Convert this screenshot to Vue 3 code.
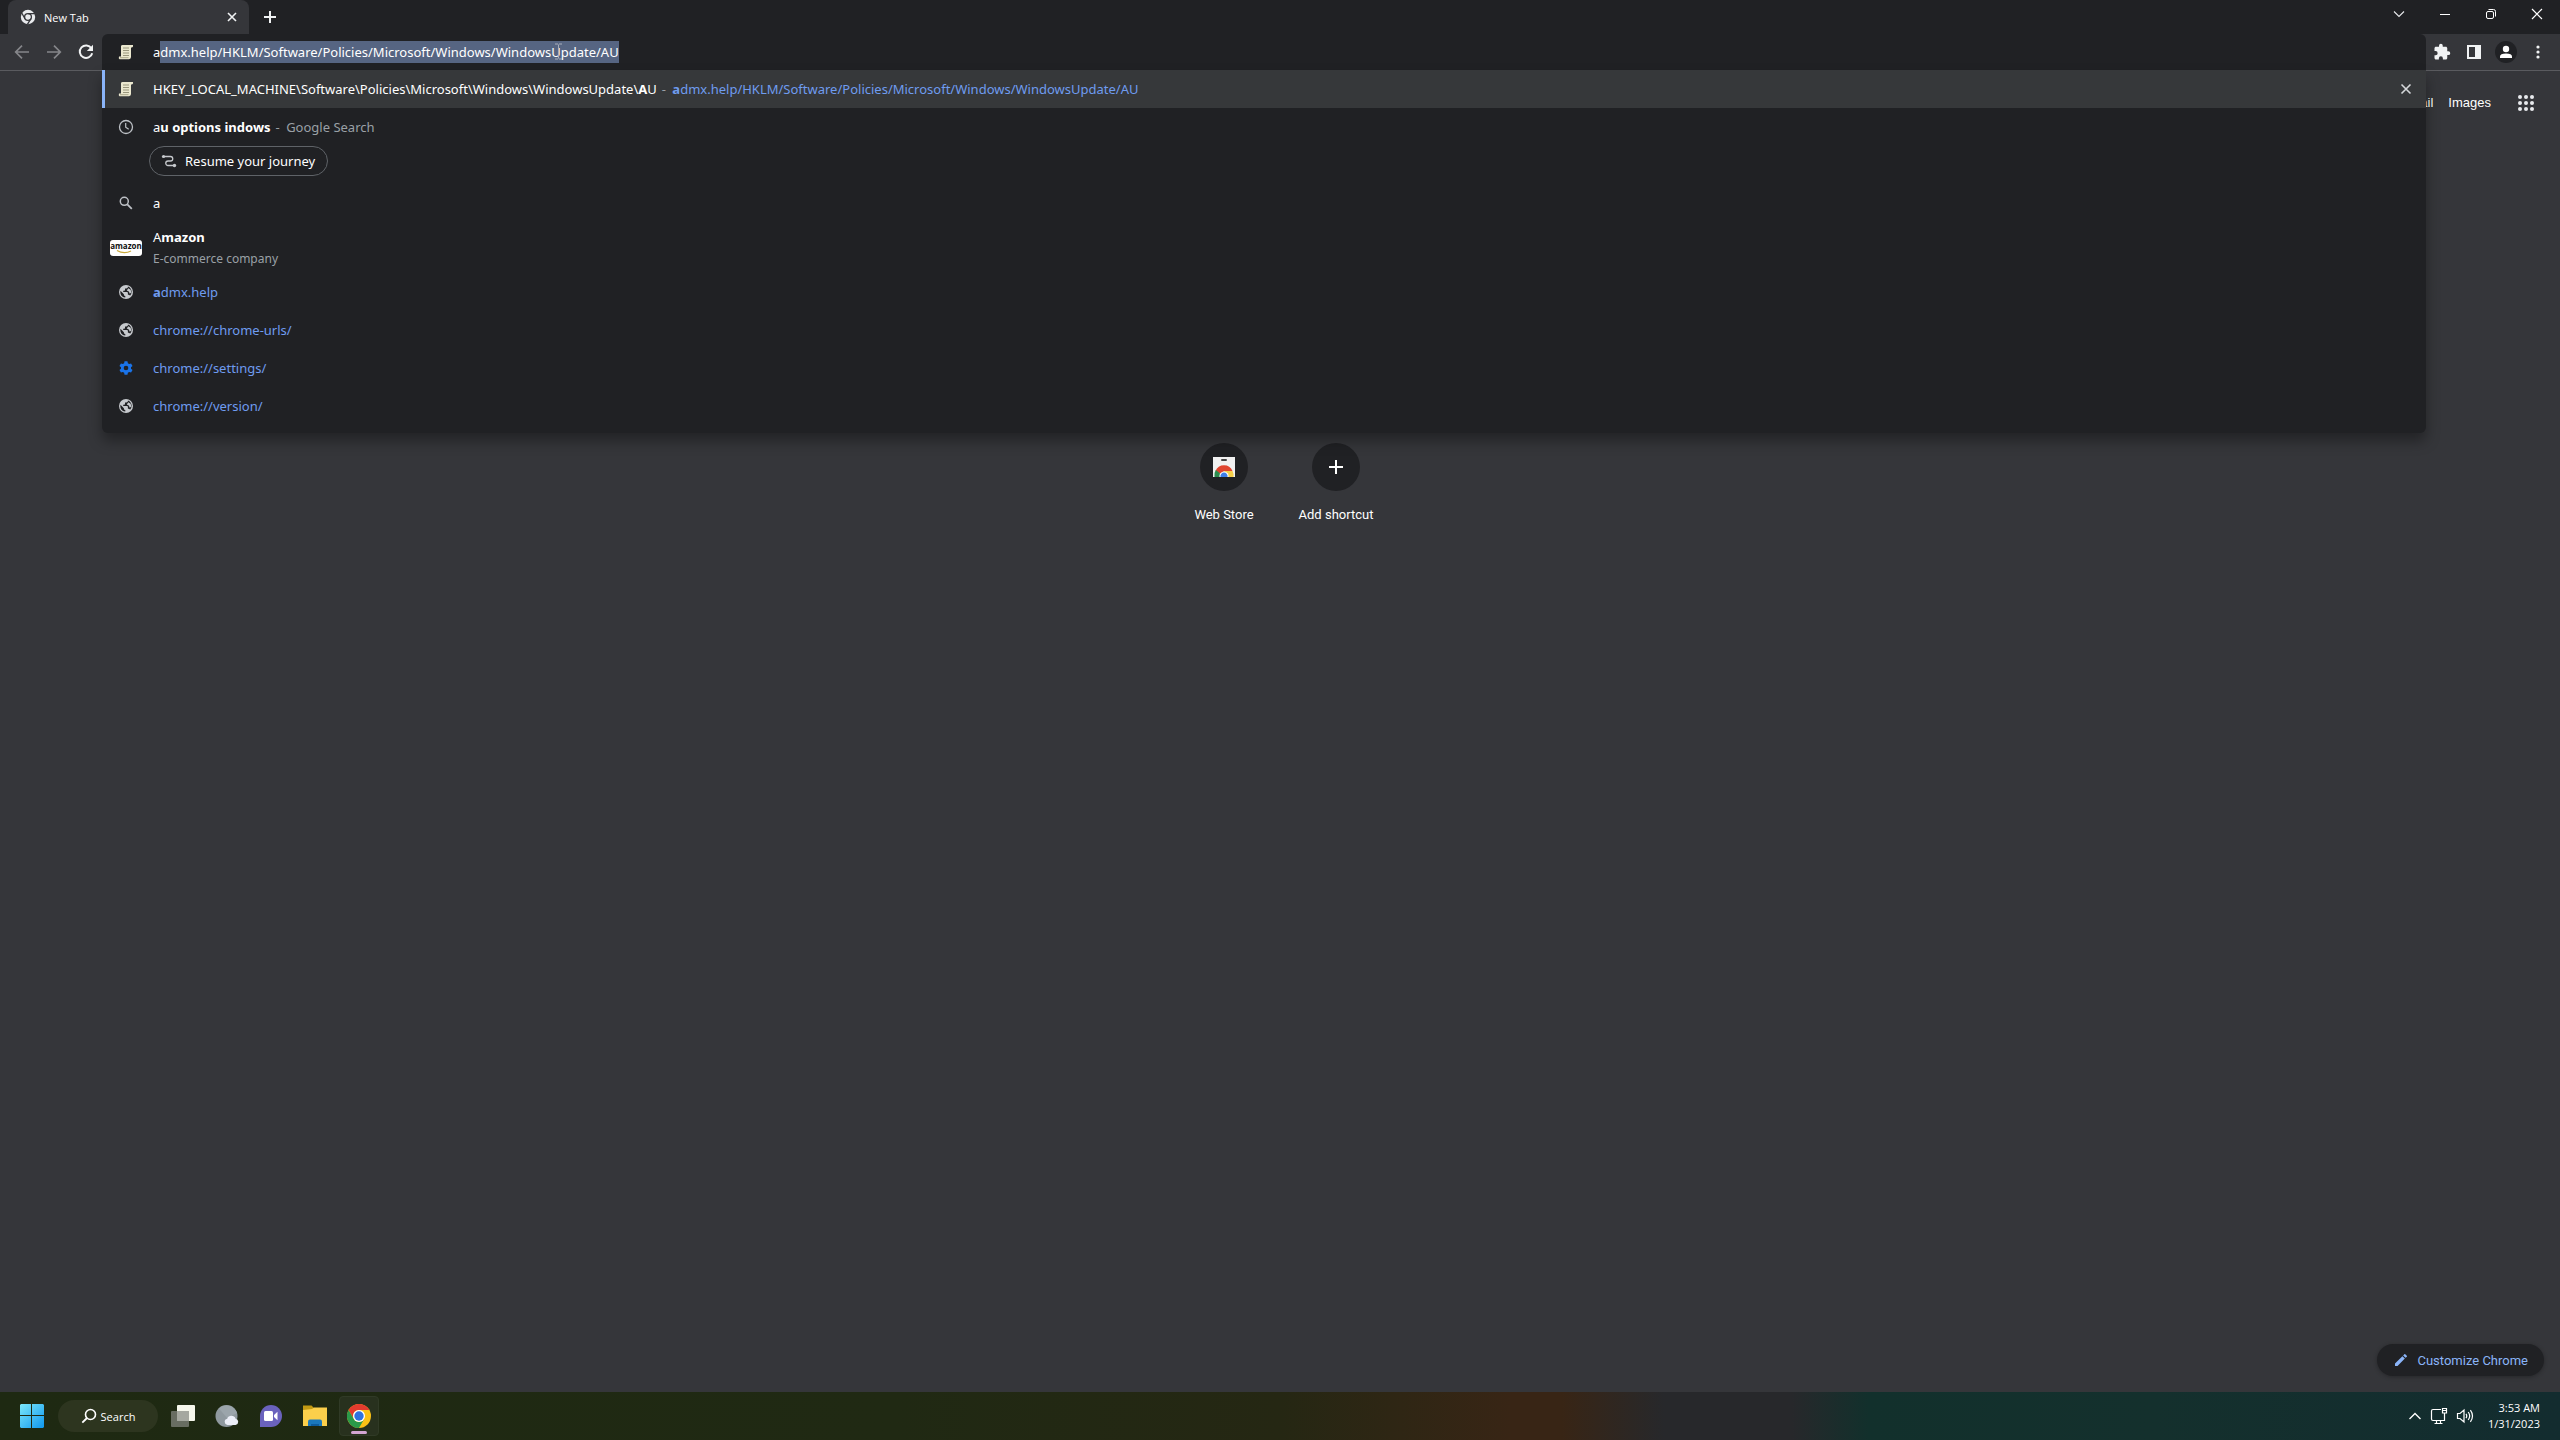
<template>
  <div class="desktop">
    <div class="browser">
      <header class="tab-strip">
        <div class="tab">
          <svg class="tab-icon" viewBox="0 0 16 16">
            <circle cx="8" cy="8" r="7.2" fill="#e8eaed" />
            <circle cx="8" cy="8" r="3.4" fill="none" stroke="#35363a" stroke-width="1.3" />
            <path d="M8 4.6H15M5 9.7L1.6 3.8M10.9 9.7L7.4 15.4" stroke="#35363a" stroke-width="1.3" />
          </svg>
          <span class="tab-title">New Tab</span>
          <button class="icon-btn tab-close" aria-label="Close tab">
            <svg width="16" height="16" viewBox="0 0 16 16"><path d="M4 4l8 8M12 4l-8 8" stroke="#f1f3f4" stroke-width="1.6" /></svg>
          </button>
        </div>
        <button class="icon-btn new-tab" aria-label="New tab">
          <svg width="16" height="16" viewBox="0 0 16 16"><path d="M8 2v12M2 8h12" stroke="#f1f3f4" stroke-width="2" /></svg>
        </button>
        <div class="window-controls">
          <button class="icon-btn" aria-label="Search tabs">
            <svg width="14" height="14" viewBox="0 0 14 14"><path d="M2 4.5l5 5 5-5" fill="none" stroke="#e8eaed" stroke-width="1.1" /></svg>
          </button>
          <button class="icon-btn" aria-label="Minimize">
            <svg width="14" height="14" viewBox="0 0 14 14"><path d="M2 7.500h10" stroke="#fff" stroke-width="1" /></svg>
          </button>
          <button class="icon-btn" aria-label="Restore">
            <svg width="14" height="14" viewBox="0 0 14 14">
              <rect x="2.500" y="4.500" width="7" height="7" rx="1.500" fill="none" stroke="#fff" />
              <path d="M4.500 2.500H9.500Q11.500 2.500 11.500 4.500V9.500" fill="none" stroke="#fff" />
            </svg>
          </button>
          <button class="icon-btn" aria-label="Close">
            <svg width="14" height="14" viewBox="0 0 14 14"><path d="M2 2l10 10M12 2L2 12" stroke="#fff" stroke-width="1.2" /></svg>
          </button>
        </div>
      </header>

      <div class="toolbar">
        <nav class="nav-buttons">
          <button class="icon-btn" aria-label="Back">
            <svg width="16" height="16" viewBox="0 0 16 16"><path d="M15 8H2M8 1.700L1.700 8 8 14.300" fill="none" stroke="#85868a" stroke-width="1.700" /></svg>
          </button>
          <button class="icon-btn" aria-label="Forward">
            <svg width="16" height="16" viewBox="0 0 16 16"><path d="M1 8h13M8 1.700L14.300 8 8 14.300" fill="none" stroke="#85868a" stroke-width="1.700" /></svg>
          </button>
          <button class="icon-btn" aria-label="Reload">
            <svg width="16" height="16" viewBox="0 0 16 16">
              <path d="M13.400 4.300A6.300 6.300 0 1 0 14.200 9.200" fill="none" stroke="#f1f3f4" stroke-width="2" />
              <path d="M15 0.800V7H8.800z" fill="#f1f3f4" />
            </svg>
          </button>
        </nav>

        <div class="omnibox">
          <div class="omnibox-row">
            <span class="row-icon">
              <svg width="16" height="16" viewBox="0 0 16 16">
                <path d="M3 2Q3.300 1 4.500 1H15Q15.600 2.500 14 3.500H13V13Q13 15 11 15.200H1.500Q0.300 14.500 1 12.500H3z" fill="#ebe8cf" />
                <path d="M5 4h6M5 6.500h6M5 9h6M5 11.500h6" stroke="#99967c" stroke-width="1" />
                <path d="M2 13.700h8.500" stroke="#aaa78a" stroke-width="1" />
              </svg>
            </span>
            <input ref="addressInput" class="address" type="text" aria-label="Address and search bar" spellcheck="false" :value="address" />
          </div>
          <svg class="ibeam" width="9" height="17" viewBox="0 0 9 17">
            <path d="M1 1h3M5 1h3M4.500 1.500v14M1 16h3M5 16h3" fill="none" stroke="#a9afbb" stroke-width="1" />
          </svg>

          <ul class="suggestions">
            <li v-for="item in suggestions" :key="item.id" class="suggestion" :class="{ selected: item.selected, tall: item.sub, chipped: item.chip }">
              <div class="suggestion-line">
                <span class="row-icon">
                  <svg v-if="item.icon === 'scroll'" width="16" height="16" viewBox="0 0 16 16">
                    <path d="M3 2Q3.300 1 4.500 1H15Q15.600 2.500 14 3.500H13V13Q13 15 11 15.200H1.500Q0.300 14.500 1 12.500H3z" fill="#ebe8cf" />
                    <path d="M5 4h6M5 6.500h6M5 9h6M5 11.500h6" stroke="#99967c" stroke-width="1" />
                    <path d="M2 13.700h8.500" stroke="#aaa78a" stroke-width="1" />
                  </svg>
                  <svg v-else-if="item.icon === 'clock'" width="16" height="16" viewBox="0 0 16 16">
                    <circle cx="8" cy="8" r="6.500" fill="none" stroke="#bdc1c6" stroke-width="1.300" />
                    <path d="M7.700 4v4.300l3 2" fill="none" stroke="#bdc1c6" stroke-width="1.200" />
                  </svg>
                  <svg v-else-if="item.icon === 'search'" width="16" height="16" viewBox="0 0 16 16">
                    <circle cx="6.300" cy="6.300" r="4" fill="none" stroke="#bdc1c6" stroke-width="1.500" />
                    <path d="M9.300 9.300l4.500 4.500" stroke="#bdc1c6" stroke-width="1.800" />
                  </svg>
                  <svg v-else-if="item.icon === 'amazon'" width="32" height="16" viewBox="0 0 32 16">
                    <rect width="32" height="16" rx="3" fill="#fff" />
                    <text x="16" y="9" text-anchor="middle" class="amazon-word">amazon</text>
                    <path d="M7 10.500Q14 14.500 21 11" fill="none" stroke="#c9a93c" stroke-width="1.200" />
                  </svg>
                  <svg v-else-if="item.icon === 'gear'" width="16" height="16" viewBox="0 0 24 24">
                    <path fill="#1a73e8" fill-rule="evenodd" d="M9.800 2h4.400l.6 3 1.900 1.100 2.900-1 2.200 3.800-2.300 2v2.200l2.300 2-2.200 3.800-2.900-1-1.900 1.100-.6 3H9.800l-.6-3-1.900-1.100-2.900 1-2.200-3.800 2.300-2v-2.200l-2.300-2 2.200-3.800 2.900 1L9.200 5zM12 8.500a3.500 3.500 0 1 0 0 7 3.500 3.500 0 0 0 0-7z" />
                  </svg>
                  <svg v-else width="16" height="16" viewBox="0 0 16 16">
                    <circle cx="8" cy="8" r="7" fill="#c6c9cd" />
                    <path d="M10 2.600Q10 4.600 8.300 4.600H7V6Q7 6.700 6.200 6.700H5.200V8H9Q9.900 8 9.900 8.900V10.700H10.600Q11.700 10.700 12 11.700 13.700 10 13.600 7.600 13.300 4 10 2.600z" fill="#202124" />
                    <path d="M2.500 6.800L5.900 10.200V10.800Q5.900 12 7.300 12V13.600Q3.800 13.300 2.600 10 2.100 8.300 2.500 6.800z" fill="#202124" />
                    <path d="M10.300 4.300l2.400 1.500.5 2.700-1.400 1.300-1-2.200-2-1.200z" fill="#c6c9cd" />
                  </svg>
                </span>
                <div class="suggestion-text">
                  <a class="match" :class="{ url: item.isUrl }" href="#"><span v-for="(part, i) in item.title" :key="i" :class="{ bold: part.bold }">{{ part.text }}</span></a>
                  <span v-if="item.desc" class="desc"><span class="dash">-</span> {{ item.desc }}</span>
                  <span v-if="item.link" class="desc"><span class="dash">-</span> <span class="url"><span class="bold">{{ item.link[0] }}</span>{{ item.link.slice(1) }}</span></span>
                  <div v-if="item.sub" class="sub">{{ item.sub }}</div>
                </div>
                <button v-if="item.selected" class="icon-btn remove" aria-label="Remove suggestion">
                  <svg width="16" height="16" viewBox="0 0 16 16"><path d="M3.500 3.500l9 9M12.500 3.500l-9 9" stroke="#d5d7da" stroke-width="1.600" /></svg>
                </button>
              </div>
              <button v-if="item.chip" class="chip">
                <svg width="16" height="16" viewBox="0 0 16 16">
                  <circle cx="2.500" cy="3.500" r="1.600" fill="#c6c9cd" />
                  <circle cx="13.500" cy="12.500" r="1.700" fill="#c6c9cd" />
                  <path d="M3 3.500H9.500a2.200 2.200 0 0 1 0 4.500H7a2.200 2.200 0 0 0 0 4.500H13" fill="none" stroke="#c6c9cd" stroke-width="1.300" />
                </svg>
                {{ item.chip }}
              </button>
            </li>
          </ul>
        </div>

        <div class="toolbar-actions">
          <button class="icon-btn" aria-label="Extensions">
            <svg width="18" height="18" viewBox="0 0 24 24"><path fill="#f1f3f4" d="M20.500 11H19V7c0-1.100-.9-2-2-2h-4V3.500a2.500 2.500 0 0 0-5 0V5H4c-1.100 0-2 .9-2 2v3.800h1.500a2.700 2.700 0 0 1 0 5.400H2V20c0 1.100.9 2 2 2h3.800v-1.500a2.700 2.700 0 0 1 5.400 0V22H17c1.100 0 2-.9 2-2v-4h1.500a2.500 2.500 0 0 0 0-5z" /></svg>
          </button>
          <button class="icon-btn" aria-label="Side panel">
            <svg width="16" height="16" viewBox="0 0 16 16"><path d="M1 1h14v14H1zM3 3v10h6V3z" fill="#f1f3f4" fill-rule="evenodd" /></svg>
          </button>
          <button class="icon-btn" aria-label="Profile">
            <svg width="22" height="22" viewBox="0 0 22 22">
              <circle cx="11" cy="11" r="11" fill="#202124" />
              <circle cx="11" cy="8" r="3.200" fill="#fff" />
              <path d="M5 17v-1.500Q5 12.500 11 12.500t6 3V17z" fill="#fff" />
            </svg>
          </button>
          <button class="icon-btn" aria-label="Menu">
            <svg width="16" height="16" viewBox="0 0 16 16" fill="#f1f3f4"><circle cx="8" cy="3" r="1.600" /><circle cx="8" cy="8" r="1.600" /><circle cx="8" cy="13" r="1.600" /></svg>
          </button>
        </div>
      </div>

      <main class="new-tab-page">
        <div class="google-links">
          <a href="#">Gmail</a>
          <a href="#">Images</a>
          <button class="icon-btn apps" aria-label="Google apps">
            <svg width="16" height="16" viewBox="0 0 16 16" fill="#e8eaed">
              <template v-for="y in [2, 8, 14]" :key="y">
                <circle v-for="x in [2, 8, 14]" :key="x" :cx="x" :cy="y" r="2" />
              </template>
            </svg>
          </button>
        </div>

        <div class="shortcuts">
          <a class="shortcut" href="#">
            <span class="shortcut-icon">
              <svg width="22" height="20" viewBox="0 0 22 20">
                <rect width="22" height="20" fill="#f1f1f1" />
                <rect x="8" y="2" width="6" height="2" rx="1" fill="#444" />
                <path d="M2.500 14A9.200 9.200 0 0 1 19.500 14H11L7 19z" fill="#e0452f" />
                <path d="M2.800 13A9 9 0 0 0 1.500 20H8L7.200 16.500z" fill="#2c8c4e" />
                <path d="M11 14h8.500a9 9 0 0 1 1 6H12z" fill="#f6cf4a" />
                <path d="M6.500 20a4.600 4.600 0 1 1 9 0z" fill="#fff" />
                <path d="M7.500 20a3.600 3.600 0 1 1 7 0z" fill="#3f7fe8" />
              </svg>
            </span>
            Web Store
          </a>
          <button class="shortcut">
            <span class="shortcut-icon">
              <svg width="14" height="14" viewBox="0 0 14 14"><path d="M7 0v14M0 7h14" stroke="#fff" stroke-width="2" /></svg>
            </span>
            Add shortcut
          </button>
        </div>

        <button class="customize">
          <svg width="16" height="16" viewBox="0 0 24 24"><path fill="#8ab4f8" d="M3 17.200V21h3.800L17.800 9.900l-3.700-3.700zM20.700 7a1 1 0 0 0 0-1.400l-2.300-2.300a1 1 0 0 0-1.400 0l-1.800 1.800 3.700 3.700z" /></svg>
          Customize Chrome
        </button>
      </main>
    </div>

    <footer class="taskbar">
      <button class="task-btn" aria-label="Start">
        <svg width="24" height="24" viewBox="0 0 24 24">
          <defs>
            <linearGradient id="win" x1="0" y1="0" x2="24" y2="24" gradientUnits="userSpaceOnUse">
              <stop offset="0" stop-color="#7ce8fb" />
              <stop offset="1" stop-color="#0f97ee" />
            </linearGradient>
          </defs>
          <path fill="url(#win)" d="M1 0h10v11H0V1zM12 0h11l1 1v10H12zM0 12h11v12H1l-1-1zM12 12h12v11l-1 1H12z" />
        </svg>
      </button>
      <button class="task-search">
        <svg width="16" height="16" viewBox="0 0 16 16"><circle cx="9.500" cy="6.500" r="5" fill="none" stroke="#fff" stroke-width="1.600" /><path d="M6 10l-4.700 4.700" stroke="#fff" stroke-width="1.800" /></svg>
        Search
      </button>
      <button class="task-btn" aria-label="Task view">
        <svg width="24" height="24" viewBox="0 0 24 24">
          <rect x="6" y="1" width="18" height="16" rx="1" fill="#f5f7ec" />
          <rect x="0" y="7" width="18" height="16" rx="1" fill="#70746b" fill-opacity=".9" />
          <rect x="6" y="7" width="12" height="10" fill="#a5a8a0" />
        </svg>
      </button>
      <button class="task-btn" aria-label="Weather">
        <svg width="24" height="24" viewBox="0 0 24 24">
          <circle cx="11.500" cy="12" r="11" fill="#8f999f" />
          <path d="M4 4.500A11 11 0 0 1 22 9L12 14z" fill="#9ba5ab" />
          <path d="M12.500 21a3.200 3.200 0 0 1-.3-6.300 4.500 4.500 0 0 1 8.400 0A3.200 3.200 0 0 1 20.600 21z" fill="#eceff8" />
        </svg>
      </button>
      <button class="task-btn" aria-label="Chat">
        <svg width="24" height="24" viewBox="0 0 24 24">
          <path d="M12 1a11 11 0 1 1 0 22H1V12A11 11 0 0 1 12 1z" fill="#6a62bd" />
          <rect x="5" y="7" width="9" height="10" rx="1.500" fill="#fff" />
          <path d="M15 11l3.500-3.200V16.200L15 13z" fill="#fff" />
        </svg>
      </button>
      <button class="task-btn" aria-label="File Explorer">
        <svg width="24" height="24" viewBox="0 0 24 24">
          <path d="M0 1.500H8.500L11 4V8H0z" fill="#c29a13" />
          <path d="M0 6L9 5l2-1.500H24V22H0z" fill="#fbcf4b" />
          <path d="M5 22V17.500Q5 15.500 7 15.500H17Q19 15.500 19 17.500V22z" fill="#1a78bd" />
          <path d="M8 22v-2h8v2z" fill="#0d5c9e" />
        </svg>
      </button>
      <button class="task-btn active" aria-label="Google Chrome">
        <svg width="24" height="24" viewBox="0 0 24 24">
          <circle cx="12" cy="12" r="12" fill="#fbc116" />
          <path d="M1.600 6A12 12 0 0 1 22.400 6H12A6 6 0 0 0 6.800 15z" fill="#e33b2e" />
          <path d="M1.600 6L6.800 15A6 6 0 0 0 17.200 15L12 24A12 12 0 0 1 1.600 6z" fill="#2a9a49" />
          <circle cx="12" cy="12" r="6" fill="#fff" />
          <circle cx="12" cy="12" r="4.700" fill="#2f72e0" />
        </svg>
      </button>

      <div class="tray">
        <button class="icon-btn" aria-label="Show hidden icons">
          <svg width="14" height="14" viewBox="0 0 14 14"><path d="M1.500 10L7 4.500l5.500 5.500" fill="none" stroke="#fff" stroke-width="1.400" /></svg>
        </button>
        <button class="icon-btn" aria-label="Network">
          <svg width="18" height="18" viewBox="0 0 18 18" fill="none" stroke="#fff" stroke-width="1.200">
            <path d="M11 2.500H3Q1.500 2.500 1.500 4v8Q1.500 13.500 3 13.500H14.500V8M6.500 13.500V16M10.500 13.500V16M4.500 16.500h8" />
            <path d="M12.500 1.500h4v4.500h-4zM14.500 6v2M12.500 3.500h4" />
          </svg>
        </button>
        <button class="icon-btn" aria-label="Volume">
          <svg width="18" height="18" viewBox="0 0 18 18" fill="none" stroke="#fff" stroke-width="1.200">
            <path d="M1.500 6.500H4L8 3v12L4 11.500H1.500zM10 6.800q1.500 2.200 0 4.400M12.200 5q3 4 0 8M14.400 3.200q4.200 5.800 0 11.600" />
          </svg>
        </button>
        <div class="clock">
          <time>3:53 AM</time>
          <time>1/31/2023</time>
        </div>
      </div>
    </footer>
  </div>
</template>

<script setup>
import { onMounted, ref } from 'vue';

const address = 'admx.help/HKLM/Software/Policies/Microsoft/Windows/WindowsUpdate/AU';
const addressInput = ref(null);

const suggestions = [
  {
    id: 1,
    icon: 'scroll',
    selected: true,
    title: [{ text: 'HKEY_LOCAL_MACHINE\\Software\\Policies\\Microsoft\\Windows\\WindowsUpdate\\' }, { text: 'A', bold: true }, { text: 'U' }],
    link: address
  },
  {
    id: 2,
    icon: 'clock',
    title: [{ text: 'a' }, { text: 'u options indows', bold: true }],
    desc: 'Google Search',
    chip: 'Resume your journey'
  },
  { id: 3, icon: 'search', title: [{ text: 'a' }] },
  { id: 4, icon: 'amazon', title: [{ text: 'A' }, { text: 'mazon', bold: true }], sub: 'E-commerce company' },
  { id: 5, icon: 'globe', isUrl: true, title: [{ text: 'a', bold: true }, { text: 'dmx.help' }] },
  { id: 6, icon: 'globe', isUrl: true, title: [{ text: 'chrome://chrome-urls/' }] },
  { id: 7, icon: 'gear', isUrl: true, title: [{ text: 'chrome://settings/' }] },
  { id: 8, icon: 'globe', isUrl: true, title: [{ text: 'chrome://version/' }] }
];

// keep the typed letter, select the autocompleted rest
onMounted(() => {
  addressInput.value.focus();
  addressInput.value.setSelectionRange(1, address.length);
});
</script>

<style>
body {
  margin: 0;
  background: #35363a;
}
</style>

<style scoped>
* {
  box-sizing: border-box;
}

.desktop {
  display: flex;
  flex-direction: column;
  min-height: 100vh;
  font-family: "Segoe UI", "Noto Sans", sans-serif;
  font-size: 13px;
  color: #fff;
}

button {
  border: 0;
  padding: 0;
  background: none;
  color: inherit;
  font: inherit;
}

a {
  color: inherit;
  text-decoration: none;
}

svg {
  flex: none;
  display: block;
}

.icon-btn {
  display: flex;
  align-items: center;
  justify-content: center;
}

.browser {
  flex: 1;
  display: flex;
  flex-direction: column;
  background: #35363a;
}

/* tabs */
.tab-strip {
  display: flex;
  height: 34px;
  padding-left: 8px;
  background: #202124;
}

.tab {
  display: flex;
  align-items: center;
  width: 241px;
  padding: 0 9px 0 12px;
  border-radius: 8px 8px 0 0;
  background: #35363a;
}

.tab-icon {
  width: 16px;
  height: 16px;
}

.tab-title {
  flex: 1;
  margin-left: 8px;
  font-family: "Segoe UI", "Open Sans", sans-serif;
  font-size: 11px;
}

.new-tab {
  width: 42px;
}

.window-controls {
  display: flex;
  margin-left: auto;
}

.window-controls .icon-btn {
  width: 46px;
  height: 28px;
}

/* toolbar */
.toolbar {
  display: flex;
  height: 37px;
  border-bottom: 1px solid #5a5b5f;
}

.nav-buttons {
  display: flex;
  padding-left: 6px;
}

.nav-buttons .icon-btn,
.toolbar-actions .icon-btn {
  width: 32px;
}

.toolbar-actions {
  display: flex;
  padding-right: 6px;
}

.omnibox {
  position: relative;
  z-index: 2;
  flex: 1;
  border-radius: 6px 6px 0 0;
  background: #202124;
}

.omnibox-row {
  display: flex;
  align-items: center;
  height: 36px;
  padding-left: 8px;
}

.row-icon {
  display: flex;
  justify-content: center;
  flex: none;
  width: 32px;
  margin-right: 11px;
}

.address {
  flex: 1;
  height: 22px;
  padding: 0;
  border: 0;
  outline: 0;
  background: none;
  color: #fff;
  font: inherit;
  line-height: 22px;
}

.address::selection {
  background: #566582;
  color: #fff;
}

.ibeam {
  position: absolute;
  left: 452px;
  top: 9px;
}

/* dropdown */
.suggestions {
  position: absolute;
  top: 36px;
  left: 0;
  right: 0;
  margin: 0;
  padding: 0 0 8px;
  list-style: none;
  border-radius: 0 0 6px 6px;
  background: #202124;
  box-shadow: 0 8px 14px rgba(0, 0, 0, 0.35);
}

.suggestion-line {
  display: flex;
  align-items: center;
  height: 38px;
  padding-left: 8px;
}

.selected .suggestion-line {
  padding-left: 5px;
  border-left: 3px solid #8ab4f8;
  background: #36383a;
}

.tall .suggestion-line {
  height: 51px;
}

.chipped {
  padding-bottom: 8px;
}

.suggestion-text {
  flex: 1;
  line-height: 21px;
}

.bold {
  font-weight: 700;
}

.dash {
  margin: 0 3px 0 5px;
}

.url {
  color: #6f9cf0;
}

.desc,
.sub {
  color: #9aa0a6;
}

.sub {
  font-size: 12px;
}

.remove {
  width: 28px;
  height: 28px;
  margin-right: 6px;
}

.chip {
  display: flex;
  align-items: center;
  gap: 8px;
  height: 30px;
  margin-left: 47px;
  padding: 0 12px 0 11px;
  border: 1px solid #5f6368;
  border-radius: 15px;
}

.amazon-word {
  font: 700 8px "Open Sans", sans-serif;
  fill: #111;
}

/* new tab page */
.new-tab-page {
  flex: 1;
  display: flex;
  flex-direction: column;
  font-family: Roboto, Arial, sans-serif;
}

.google-links {
  display: flex;
  align-items: center;
  justify-content: flex-end;
  gap: 15px;
  height: 63px;
  padding-right: 18px;
  font-family: "Liberation Sans", Arial, sans-serif;
}

.apps {
  width: 32px;
  height: 32px;
  margin-left: 4px;
}

.shortcuts {
  display: flex;
  justify-content: center;
  margin-top: 309px;
}

.shortcut {
  display: flex;
  flex-direction: column;
  align-items: center;
  gap: 16px;
  width: 112px;
  line-height: 16px;
}

.shortcut-icon {
  display: flex;
  align-items: center;
  justify-content: center;
  width: 48px;
  height: 48px;
  border-radius: 50%;
  background: #202124;
}

.customize {
  display: flex;
  align-items: center;
  gap: 8px;
  height: 32px;
  margin: auto 16px 16px;
  align-self: flex-end;
  padding: 0 16px;
  border-radius: 16px;
  background: #202124;
  box-shadow: 0 1px 4px rgba(0, 0, 0, 0.3);
  color: #8ab4f8;
}

/* taskbar */
.taskbar {
  display: flex;
  align-items: center;
  gap: 4px;
  height: 48px;
  padding: 0 20px 0 12px;
  background: linear-gradient(90deg, #1e2912 0%, #202913 35%, #252713 50%, #382515 59%, #382515 61%, #27282b 65%, #27282b 70%, #12302c 73%, #14302d 84%, #132c2f 100%);
  font-family: "Segoe UI", "Open Sans", sans-serif;
  font-size: 11px;
}

.task-btn {
  display: flex;
  align-items: center;
  justify-content: center;
  width: 40px;
  height: 40px;
  border-radius: 4px;
}

.task-search {
  display: flex;
  align-items: center;
  justify-content: center;
  gap: 4px;
  width: 100px;
  height: 32px;
  margin: 0 1px 0 2px;
  border-radius: 16px;
  background: #2d351f;
}

.active {
  position: relative;
  border: 1px solid #303a26;
  background: #28311e;
}

.active::after {
  content: "";
  position: absolute;
  bottom: 1px;
  width: 16px;
  height: 3px;
  border-radius: 2px;
  background: #d3a5d2;
}

.tray {
  display: flex;
  align-items: center;
  gap: 8px;
  margin-left: auto;
}

.clock {
  display: flex;
  flex-direction: column;
  align-items: flex-end;
  margin-left: 6px;
  line-height: 16px;
}
</style>
